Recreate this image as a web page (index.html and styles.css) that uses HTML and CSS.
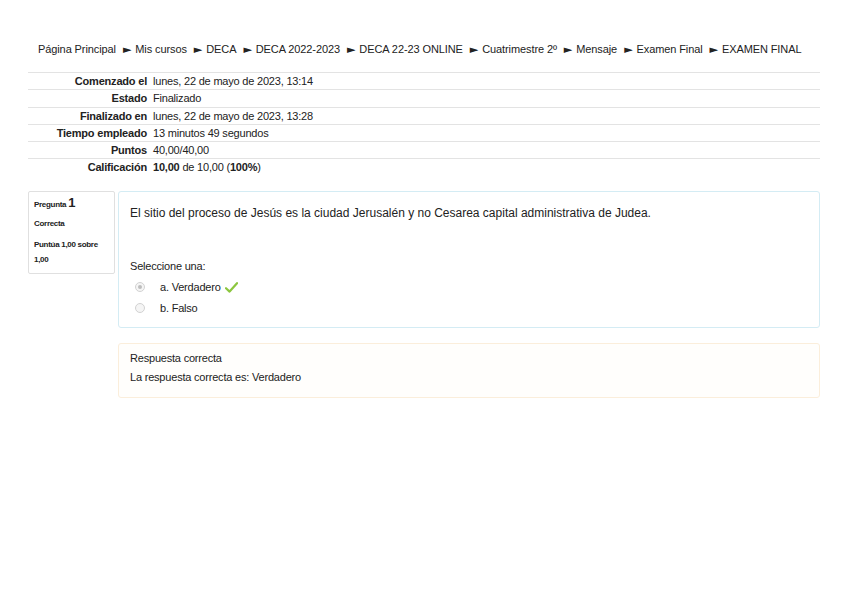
FILE: index.html
```html
<!DOCTYPE html>
<html>
<head>
  <meta charset="utf-8" />
  <title>EXAMEN FINAL: Revisión del intento</title>
  <link rel="stylesheet" href="styles.css">
</head>
<body>
<div class="page">
  <nav class="breadcrumb">
    <span>Página Principal</span><span class="sep">►</span><span>Mis cursos</span><span class="sep">►</span><span>DECA</span><span class="sep">►</span><span>DECA 2022-2023</span><span class="sep">►</span><span>DECA 22-23 ONLINE</span><span class="sep">►</span><span>Cuatrimestre 2º</span><span class="sep">►</span><span>Mensaje</span><span class="sep">►</span><span>Examen Final</span><span class="sep">►</span><span>EXAMEN FINAL</span>
  </nav>

  <table class="summary">
    <tr><th>Comenzado el</th><td>lunes, 22 de mayo de 2023, 13:14</td></tr>
    <tr><th>Estado</th><td>Finalizado</td></tr>
    <tr><th>Finalizado en</th><td>lunes, 22 de mayo de 2023, 13:28</td></tr>
    <tr><th>Tiempo empleado</th><td>13 minutos 49 segundos</td></tr>
    <tr><th>Puntos</th><td>40,00/40,00</td></tr>
    <tr><th>Calificación</th><td><b>10,00</b> de 10,00 (<b>100%</b>)</td></tr>
  </table>

  <div class="question">
    <div class="info">
      <div class="qno">Pregunta <span class="num">1</span></div>
      <div class="state">Correcta</div>
      <div class="grade">Puntúa 1,00 sobre 1,00</div>
    </div>
    <div class="content">
      <div class="formulation">
        <p class="qtext">El sitio del proceso de Jesús es la ciudad Jerusalén y no Cesarea capital administrativa de Judea.</p>
        <div class="prompt">Seleccione una:</div>
        <div class="answer">
          <div class="option">
            <span class="radio checked"></span>
            <span>a. Verdadero</span>
            <svg class="tick" width="13" height="11" viewBox="0 0 13 11"><path d="M1 6.2 L4.6 9.6 L12 1.2" fill="none" stroke="#8cc63f" stroke-width="2.2" stroke-linecap="round" stroke-linejoin="round"/></svg>
          </div>
          <div class="option">
            <span class="radio"></span>
            <span>b. Falso</span>
          </div>
        </div>
      </div>
      <div class="outcome">
        <div>Respuesta correcta</div>
        <div>La respuesta correcta es: Verdadero</div>
      </div>
    </div>
  </div>
</div>
</body>
</html>
```

FILE: styles.css
```css
* {
  box-sizing: border-box;
}
body {
  margin: 0;
  padding: 0;
  background: #fff;
  font-family: "Liberation Sans", Arial, sans-serif;
  font-size: 11px;
  color: #222;
  letter-spacing: -0.2px;
}
.page {
  padding: 42px 28px 0 28px;
}
.breadcrumb {
  padding-left: 10px;
  line-height: 14px;
  white-space: nowrap;
  letter-spacing: -0.1px;
}
.breadcrumb .sep {
  font-family: "DejaVu Sans", sans-serif;
  font-size: 11px;
  margin: 0 4px 0 7px;
}
.summary {
  width: 792px;
  margin-top: 15px;
  border-collapse: collapse;
}
.summary th,
.summary td {
  border-top: 1px solid #e3e3e3;
  padding: 0;
  line-height: 16.3px;
  vertical-align: middle;
}
.summary th {
  width: 125px;
  text-align: right;
  font-weight: bold;
  padding-right: 6px;
}
.question {
  display: flex;
  gap: 3px;
  margin-top: 15px;
}
.info {
  flex: 0 0 auto;
  width: 87px;
  height: 83px;
  align-self: flex-start;
  border: 1px solid #e0e0e0;
  border-radius: 2px;
  padding: 4px 3px 3px 5px;
  font-size: 8px;
  font-weight: bold;
  letter-spacing: -0.3px;
}
.qno {
  line-height: 14px;
}
.qno .num {
  font-size: 13px;
}
.state {
  margin-top: 6px;
  line-height: 12px;
}
.grade {
  margin-top: 7px;
  line-height: 15px;
}
.content {
  flex: 1;
  display: flex;
  flex-direction: column;
  gap: 15px;
}
.formulation {
  border: 1px solid #d4ecf4;
  border-radius: 3px;
  height: 137px;
  padding: 6px 11px;
}
.qtext {
  margin: 8px 0 0 0;
  font-size: 12px;
  letter-spacing: 0;
  line-height: 14px;
}
.prompt {
  margin-top: 39px;
  line-height: 14px;
}
.answer {
  margin-top: 4px;
}
.option {
  display: flex;
  align-items: center;
  height: 21px;
  padding-left: 5px;
}
.radio {
  width: 10px;
  height: 10px;
  border-radius: 50%;
  border: 1px solid #d2d2d2;
  background: #f5f5f5;
  margin-right: 15px;
  position: relative;
}
.radio.checked::after {
  content: "";
  position: absolute;
  left: 2px;
  top: 2px;
  width: 4px;
  height: 4px;
  border-radius: 50%;
  background: #bdbdbd;
}
.tick {
  margin-left: 4px;
}
.outcome {
  border: 1px solid #fbeedb;
  border-radius: 3px;
  background: #fffefc;
  height: 55px;
  padding: 5px 11px;
  line-height: 19px;
}
```
